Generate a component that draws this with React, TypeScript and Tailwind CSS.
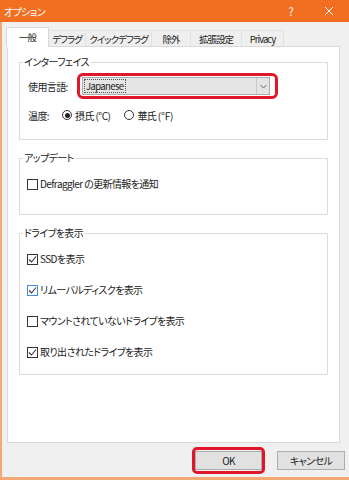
import React from "react"

const font = "font-['Noto_Sans_CJK_JP','Noto_Sans',sans-serif] [font-feature-settings:'palt'] tracking-[-0.6px]"

const tabs = [
  { label: "一般", w: "w-[43px]", active: true },
  { label: "デフラグ", w: "w-[38px]" },
  { label: "クイックデフラグ", w: "w-[67px]" },
  { label: "除外", w: "w-[40px]" },
  { label: "拡張設定", w: "w-[52px]" },
  { label: "Privacy", w: "w-[43px]" },
]

const Checkbox = ({ checked, focus }: { checked?: boolean; focus?: boolean }) => (
  <span
    className={`w-[11px] h-[11px] border bg-white flex items-center justify-center shrink-0 ${
      focus ? "border-[#3d8ee0]" : "border-[#333]"
    }`}
  >
    {checked && (
      <svg width="9" height="9" viewBox="0 0 9 9">
        <path d="M1 4.5 L3.5 7 L8 1.5" fill="none" stroke="#333" strokeWidth="1.1" />
      </svg>
    )}
  </span>
)

const Radio = ({ checked }: { checked?: boolean }) => (
  <span className="w-[10px] h-[10px] rounded-full border border-[#333] bg-white flex items-center justify-center shrink-0">
    {checked && <span className="w-[5px] h-[5px] rounded-full bg-[#222]" />}
  </span>
)

const Group = ({ title, className, children }: { title: string; className: string; children: React.ReactNode }) => (
  <div className={`relative border border-[#dcdcdc] ${className}`}>
    <span className="absolute -top-[8px] left-[3px] bg-white px-[1px] text-[10px] leading-[14px] text-[#222]">
      {title}
    </span>
    {children}
  </div>
)

const CheckRow = ({ label, checked, focus }: { label: string; checked?: boolean; focus?: boolean }) => (
  <div className="flex items-center gap-[2px] h-[14px] text-[10px] leading-[14px] text-[#222]">
    <Checkbox checked={checked} focus={focus} />
    <span>{label}</span>
  </div>
)

export default function App() {
  return (
    <div className={`w-[349px] h-[480px] bg-[#f0f0f0] flex flex-col overflow-hidden ${font}`}>
      {/* title bar */}
      <div className="h-[22px] bg-[#f26f21] flex items-center text-white text-[10px] shrink-0">
        <span className="ml-[4px]">オプション</span>
        <span className="ml-auto mr-[31px] text-[11px]">?</span>
        <svg width="10" height="10" viewBox="0 0 10 10" className="mr-[15px]">
          <path d="M1 1 L9 9 M9 1 L1 9" stroke="white" strokeWidth="1" />
        </svg>
      </div>

      <div className="flex-1 flex flex-col border-l-2 border-b-[3px] border-[#f5a873]">
        {/* tabs */}
        <div className="flex items-end h-[20px] mt-[5px] ml-[4px] text-[9.5px] tracking-[-1px] text-[#222]">
          {tabs.map((t) => (
            <div
              key={t.label}
              className={`${t.w} flex items-center justify-center whitespace-nowrap border-t border-l border-r ${
                t.active
                  ? "h-[20px] bg-white border-[#d9d9d9] relative z-10"
                  : "h-[17px] bg-[#efefef] border-[#e2e2e2] -ml-px first:ml-0"
              }`}
            >
              {t.label}
            </div>
          ))}
        </div>

        {/* panel */}
        <div className="ml-[5px] w-[333px] h-[397px] -mt-px bg-white border border-[#d9d9d9] flex flex-col px-[11px]">
          <Group title="インターフェイス" className="mt-[15px] h-[78px]">
            <div className="flex items-center pl-[8px] mt-[14px] text-[10px] text-[#222]">
              <span className="w-[54px]">使用言語:</span>
              <div className="relative">
                <div className="w-[188px] h-[18px] bg-[#e5e5e5] border border-[#adadad] flex items-center">
                  <span className="ml-[2px] px-[1px] text-[9.5px] leading-[12px] outline outline-1 outline-dotted outline-[#555] text-[#222]">
                    Japanese
                  </span>
                  <div className="ml-auto w-[13px] h-full border-l border-[#c8c8c8] flex items-center justify-center">
                    <svg width="7" height="5" viewBox="0 0 7 5">
                      <path d="M0.5 1 L3.5 4 L6.5 1" fill="none" stroke="#666" strokeWidth="1" />
                    </svg>
                  </div>
                </div>
                <div className="absolute -left-[5px] -right-[8px] -top-[4px] -bottom-[4px] border-[3px] border-[#e0172b] rounded-[6px]" />
              </div>
            </div>
            <div className="flex items-center pl-[8px] mt-[13px] h-[14px] text-[10px] text-[#222]">
              <span className="w-[34px]">温度:</span>
              <Radio checked />
              <span className="ml-[3px]">摂氏 (℃)</span>
              <span className="ml-[14px]">
                <Radio />
              </span>
              <span className="ml-[3px]">華氏 (℉)</span>
            </div>
          </Group>

          <Group title="アップデート" className="mt-[18px] h-[57px]">
            <div className="pl-[7px] pt-[18px]">
              <CheckRow label="Defraggler の更新情報を通知" />
            </div>
          </Group>

          <Group title="ドライブを表示" className="mt-[18px] h-[142px]">
            <div className="pl-[7px] pt-[18px] flex flex-col gap-[17px]">
              <CheckRow label="SSDを表示" checked />
              <CheckRow label="リムーバルディスクを表示" checked focus />
              <CheckRow label="マウントされていないドライブを表示" />
              <CheckRow label="取り出されたドライブを表示" checked />
            </div>
          </Group>
        </div>

        {/* footer */}
        <div className="flex-1 flex items-center justify-end pr-[4px] gap-[15px] text-[10px] text-[#222]">
          <div className="relative">
            <div className="w-[67px] h-[19px] bg-[#e1e1e1] border border-[#adadad] flex items-center justify-center">
              OK
            </div>
            <div className="absolute -left-[3px] -right-[3px] -top-[4px] -bottom-[4px] border-[3px] border-[#e0172b] rounded-[5px]" />
          </div>
          <div className="w-[68px] h-[19px] bg-[#e1e1e1] border border-[#adadad] flex items-center justify-center">
            キャンセル
          </div>
        </div>
      </div>
    </div>
  )
}
